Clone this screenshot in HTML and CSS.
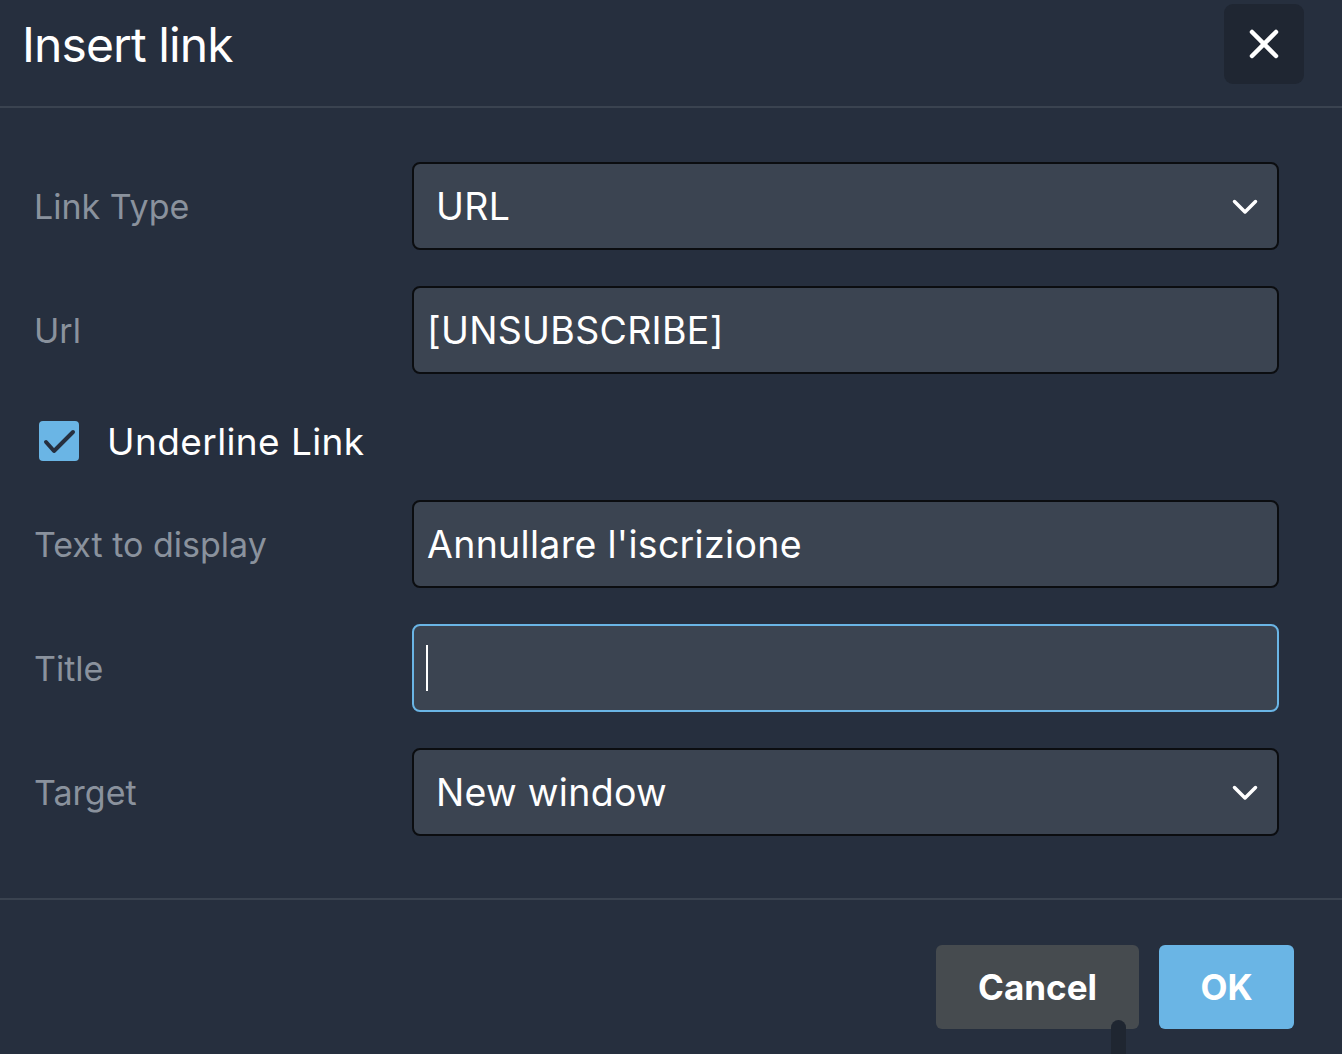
FILE: index.html
```html
<!DOCTYPE html>
<html lang="en">
<head>
<meta charset="utf-8">
<title>Insert link</title>
<link rel="stylesheet" href="styles.css">
</head>
<body>
<div class="dialog">
  <header class="dlg-header">
    <h1 class="dlg-title">Insert link</h1>
    <button class="close-btn" aria-label="Close">
      <svg width="30" height="30" viewBox="0 0 30 30"><path d="M3 3 L27 27 M27 3 L3 27" stroke="#fff" stroke-width="4.5" stroke-linecap="round" fill="none"/></svg>
    </button>
  </header>
  <main class="dlg-body">
    <div class="row">
      <label class="label">Link Type</label>
      <div class="field select">
        <span class="select-text">URL</span>
        <svg class="chev" width="26" height="16" viewBox="0 0 26 16"><path d="M2.5 2.5 L13 13 L23.5 2.5" stroke="#fff" stroke-width="3.5" stroke-linecap="round" stroke-linejoin="round" fill="none"/></svg>
      </div>
    </div>
    <div class="row">
      <label class="label">Url</label>
      <div class="field input"><span>[UNSUBSCRIBE]</span></div>
    </div>
    <div class="check-row">
      <span class="checkbox">
        <svg width="40" height="40" viewBox="0 0 40 40"><path d="M7 21 L15 30 L34 11" stroke="#262f3e" stroke-width="4" stroke-linecap="round" stroke-linejoin="round" fill="none"/></svg>
      </span>
      <span class="check-label">Underline Link</span>
    </div>
    <div class="row">
      <label class="label">Text to display</label>
      <div class="field input"><span>Annullare l'iscrizione</span></div>
    </div>
    <div class="row">
      <label class="label">Title</label>
      <div class="field input focused"><span class="caret"></span></div>
    </div>
    <div class="row">
      <label class="label">Target</label>
      <div class="field select">
        <span class="select-text">New window</span>
        <svg class="chev" width="26" height="16" viewBox="0 0 26 16"><path d="M2.5 2.5 L13 13 L23.5 2.5" stroke="#fff" stroke-width="3.5" stroke-linecap="round" stroke-linejoin="round" fill="none"/></svg>
      </div>
    </div>
  </main>
  <footer class="dlg-footer">
    <button class="btn btn-cancel">Cancel</button>
    <button class="btn btn-ok">OK</button>
    <span class="handle"></span>
  </footer>
</div>
</body>
</html>
```
FILE: styles.css
```css
* { box-sizing: border-box; }
html, body { margin: 0; padding: 0; }
body {
  background: #262f3e;
  font-family: Inter, "Noto Sans", sans-serif;
  color: #fff;
  width: 1342px;
  height: 1054px;
  overflow: hidden;
}
.dialog {
  position: relative;
  display: flex;
  flex-direction: column;
  height: 1054px;
}
.dlg-header {
  height: 108px;
  border-bottom: 2px solid #3a4350;
  display: flex;
  align-items: flex-start;
  justify-content: space-between;
  padding: 4px 38px 0 22px;
}
.dlg-title {
  margin: 0;
  height: 80px;
  display: flex;
  align-items: center;
  font-size: 48px;
  font-weight: 400;
  letter-spacing: -0.9px;
  color: #fff;
}
.close-btn {
  width: 80px;
  height: 80px;
  border: none;
  border-radius: 9px;
  background: #1f2632;
  display: flex;
  align-items: center;
  justify-content: center;
  padding: 0;
}
.dlg-body {
  padding: 54px 63px 62px 35px;
  display: flex;
  flex-direction: column;
  gap: 36px;
}
.row {
  display: flex;
  align-items: center;
  height: 88px;
}
.label {
  width: 377px;
  flex: none;
  font-size: 34px;
  color: #8a929d;
  margin-left: -1px;
  margin-right: 1px;
}
.field {
  flex: 1;
  height: 88px;
  border: 2px solid #0b0d10;
  border-radius: 8px;
  background: #3b4451;
  display: flex;
  align-items: center;
  font-size: 37.5px;
  letter-spacing: 0.3px;
  color: #fff;
}
.input { padding-left: 13px; }
.select { padding: 0 19px 0 22px; justify-content: space-between; }
.chev { margin-top: 2px; }
.focused { border-color: #6ab5e5; }
.caret {
  display: block;
  width: 2px;
  height: 46px;
  background: #fff;
  margin-left: -1px;
}
.check-row {
  height: 54px;
  display: flex;
  align-items: center;
  padding: 8px 0 0 4px;
}
.checkbox {
  width: 40px;
  height: 40px;
  border-radius: 4px;
  background: #6ab5e5;
  display: block;
  flex: none;
}
.checkbox svg { display: block; }
.check-label {
  margin-left: 28px;
  font-size: 37px;
  letter-spacing: 0.4px;
  color: #fff;
}
.dlg-footer {
  flex: 1;
  border-top: 2px solid #3a4350;
  display: flex;
  justify-content: flex-end;
  align-items: flex-start;
  gap: 20px;
  padding: 45px 48px 0 0;
  position: relative;
}
.btn {
  height: 84px;
  border: none;
  border-radius: 6px;
  font-family: Inter, "Noto Sans", sans-serif;
  font-size: 35px;
  font-weight: 700;
  color: #fff;
  padding: 0;
}
.btn-cancel { width: 203px; background: #464b4f; }
.btn-ok { width: 135px; background: #6ab5e5; }
.handle {
  position: absolute;
  left: 1111px;
  top: 120px;
  width: 15px;
  height: 40px;
  border-radius: 8px 8px 0 0;
  background: #1f2631;
}
```
